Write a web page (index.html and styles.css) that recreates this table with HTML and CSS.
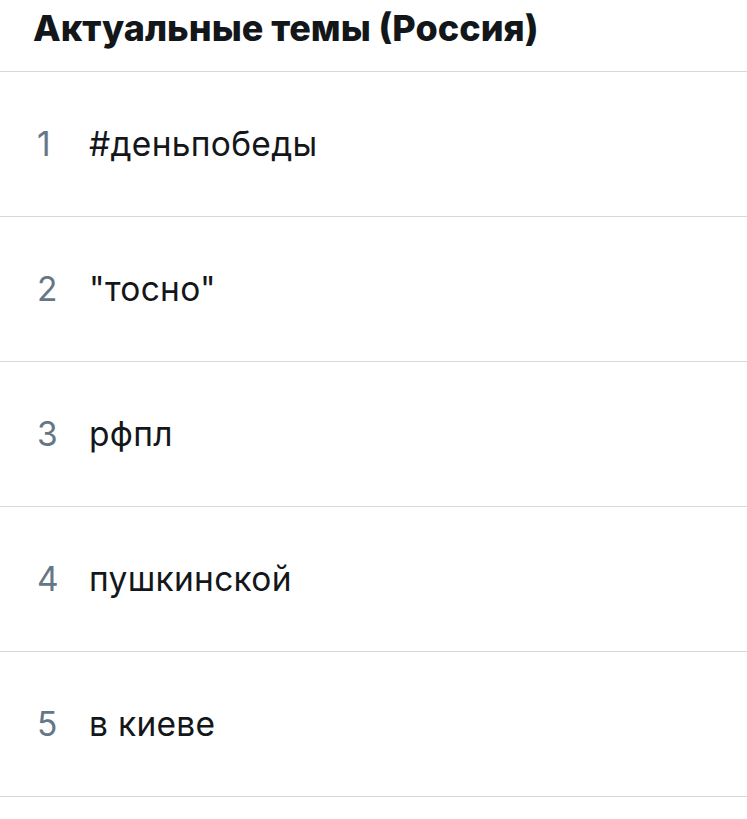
FILE: index.html
```html
<!DOCTYPE html>
<html lang="ru">
<head>
<meta charset="utf-8">
<link rel="stylesheet" href="styles.css">
</head>
<body>
<div class="panel">
  <div class="header"><h1 class="title">Актуальные темы (Россия)</h1></div>
  <ul class="trends">
    <li class="trend"><span class="rank">1</span><span class="name">#деньпобеды</span></li>
    <li class="trend"><span class="rank">2</span><span class="name">"тосно"</span></li>
    <li class="trend"><span class="rank">3</span><span class="name">рфпл</span></li>
    <li class="trend"><span class="rank">4</span><span class="name">пушкинской</span></li>
    <li class="trend"><span class="rank">5</span><span class="name">в киеве</span></li>
  </ul>
</div>
</body>
</html>
```
FILE: styles.css
```css
html, body {
  margin: 0;
  padding: 0;
  background: #ffffff;
}
body {
  font-family: Inter, "Liberation Sans", Arial, sans-serif;
  color: #14171a;
}
.panel {
  width: 747px;
}
.header {
  height: 72px;
  border-bottom: 1px solid #d8d8d8;
  padding-left: 33px;
  box-sizing: border-box;
}
.title {
  margin: 0;
  font-size: 36px;
  font-weight: 800;
  line-height: 56px;
  letter-spacing: 0;
  color: #14171a;
}
.trends {
  list-style: none;
  margin: 0;
  padding: 0;
}
.trend {
  height: 145px;
  box-sizing: border-box;
  border-bottom: 1px solid #d8d8d8;
  display: flex;
  align-items: center;
  padding-left: 37px;
  padding-bottom: 1px;
  font-size: 33.5px;
  font-weight: 400;
}
.rank {
  width: 52px;
  color: #657786;
}
.name {
  color: #14171a;
  letter-spacing: 0.3px;
}
```
